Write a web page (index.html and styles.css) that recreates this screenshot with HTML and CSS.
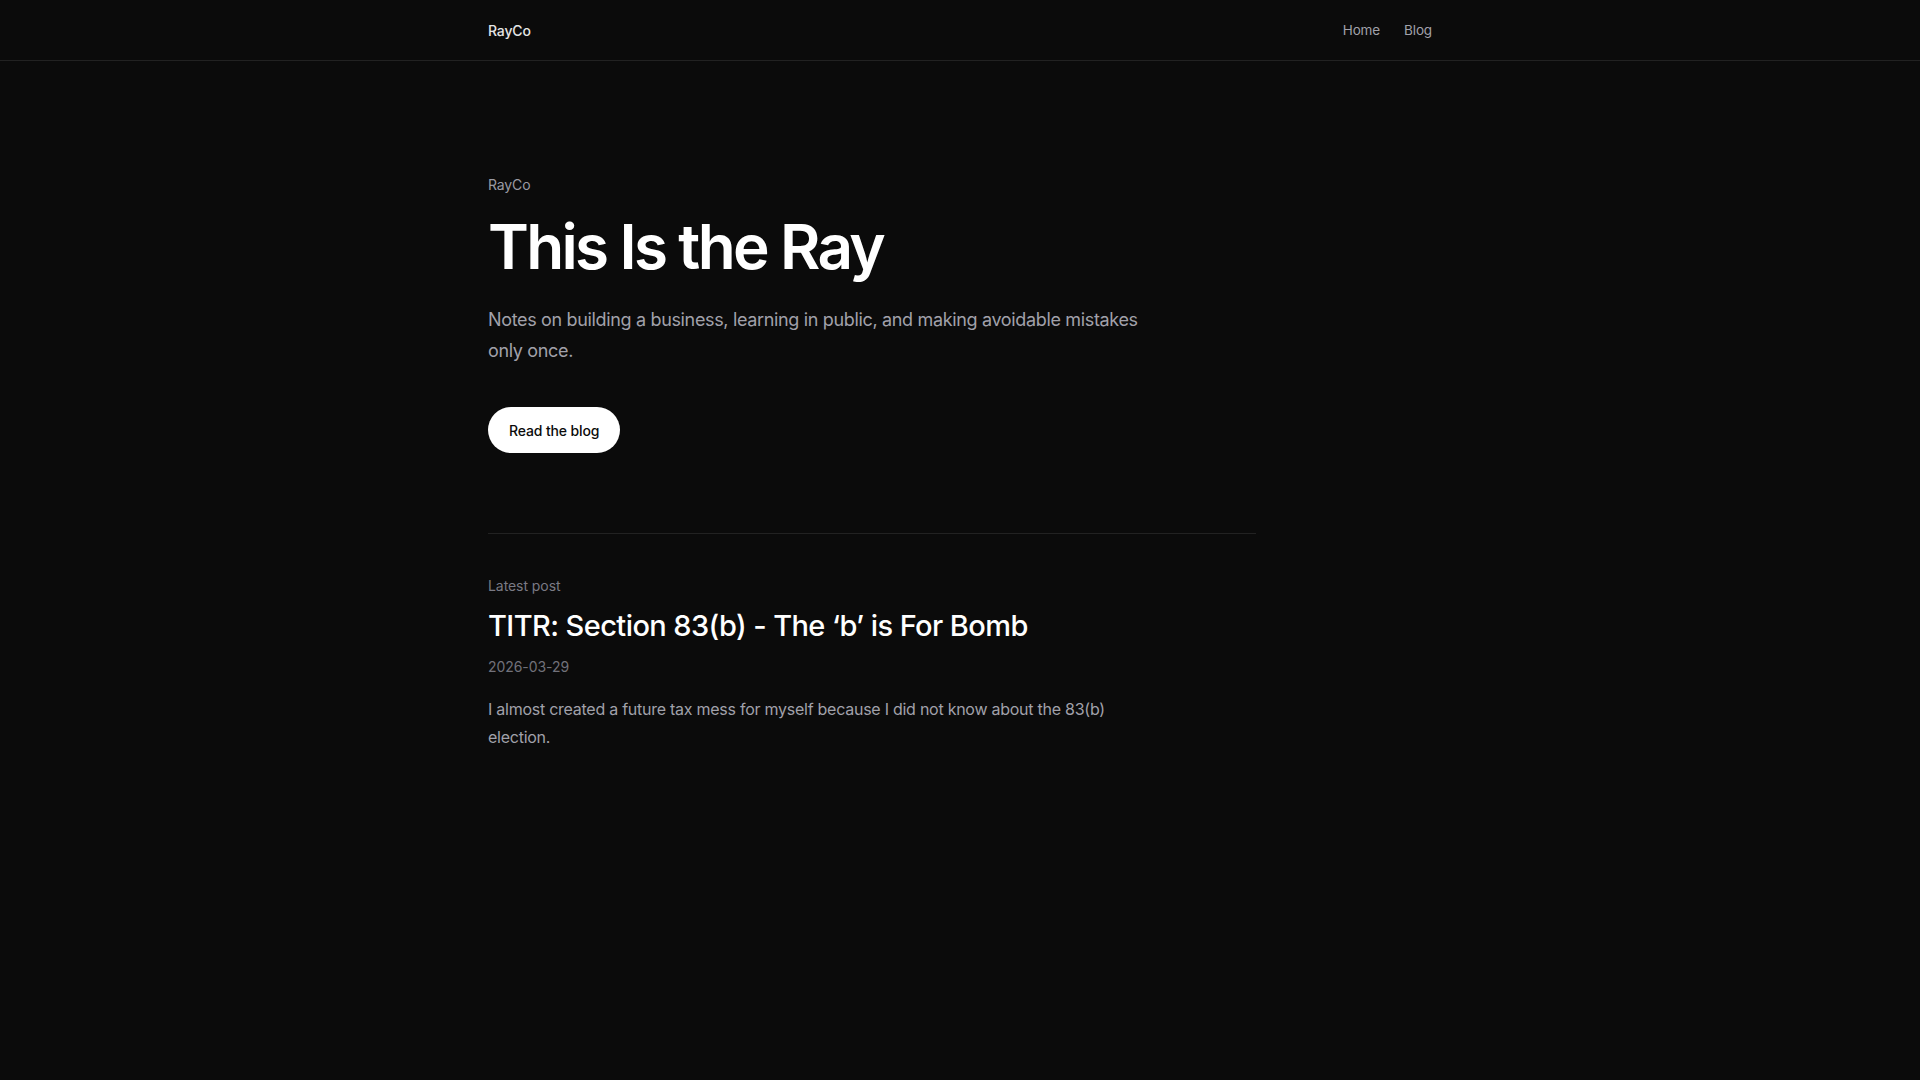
FILE: index.html
```html
<!DOCTYPE html>
<html lang="en">
<head>
<meta charset="utf-8">
<title>RayCo</title>
<link rel="stylesheet" href="styles.css">
</head>
<body>
<header class="site-header">
  <div class="container header-inner">
    <a class="brand" href="#">RayCo</a>
    <nav class="nav">
      <a href="#">Home</a>
      <a href="#">Blog</a>
    </nav>
  </div>
</header>
<main class="container">
  <div class="content">
    <section class="hero">
      <p class="eyebrow">RayCo</p>
      <h1 class="hero-title">This Is the Ray</h1>
      <p class="hero-text">Notes on building a business, learning in public, and making avoidable mistakes only once.</p>
      <a class="btn" href="#">Read the blog</a>
    </section>
    <section class="latest">
      <p class="latest-label">Latest post</p>
      <h2 class="post-title">TITR: Section 83(b) - The ‘b’ is For Bomb</h2>
      <p class="post-date">2026-03-29</p>
      <p class="post-excerpt">I almost created a future tax mess for myself because I did not know about the 83(b) election.</p>
    </section>
  </div>
</main>
</body>
</html>
```
FILE: styles.css
```css
* { box-sizing: border-box; }
html, body { margin: 0; padding: 0; }
body {
  background: #0b0b0b;
  color: #ededed;
  font-family: Inter, "Noto Sans", sans-serif;
  min-height: 1080px;
}
a { color: inherit; text-decoration: none; }
p, h1, h2 { margin: 0; }

.container {
  width: 944px;
  margin: 0 auto;
}

.site-header {
  height: 61px;
  border-bottom: 1px solid #222222;
}
.header-inner {
  height: 60px;
  display: flex;
  align-items: center;
  justify-content: space-between;
}
.brand {
  font-size: 14px;
  font-weight: 500;
  color: #e5e5e5;
  letter-spacing: -0.01em;
}
.nav {
  display: flex;
  gap: 24px;
  font-size: 13.5px;
  color: #a1a1aa;
  letter-spacing: -0.01em;
}

.content {
  max-width: 768px;
}

.hero {
  padding-top: 114px;
  padding-bottom: 80px;
  border-bottom: 1px solid #222222;
}
.eyebrow {
  font-size: 14px;
  color: #9a9aa3;
  line-height: 20px;
  letter-spacing: -0.01em;
}
.hero-title {
  margin-top: 18px;
  font-size: 62px;
  font-weight: 600;
  line-height: 1.1;
  letter-spacing: -0.043em;
  color: #ffffff;
}
.hero-text {
  margin-top: 24px;
  max-width: 672px;
  font-size: 18px;
  line-height: 1.7;
  color: #a1a1aa;
  letter-spacing: -0.019em;
}
.btn {
  display: inline-flex;
  align-items: center;
  height: 46px;
  padding: 0 21px;
  margin-top: 41px;
  border-radius: 999px;
  background: #ffffff;
  color: #0b0b0b;
  font-size: 14px;
  font-weight: 500;
  letter-spacing: -0.01em;
}

.latest {
  padding-top: 42px;
}
.latest-label {
  font-size: 14px;
  line-height: 20px;
  color: #7a7a84;
  letter-spacing: -0.005em;
}
.post-title {
  margin-top: 12px;
  font-size: 29px;
  font-weight: 500;
  line-height: 1.25;
  letter-spacing: -0.02em;
  color: #ffffff;
}
.post-date {
  margin-top: 12px;
  font-size: 14px;
  line-height: 20px;
  color: #71717a;
  letter-spacing: -0.005em;
}
.post-excerpt {
  margin-top: 18px;
  max-width: 672px;
  font-size: 16px;
  line-height: 1.75;
  color: #a1a1aa;
  letter-spacing: -0.016em;
}
```
